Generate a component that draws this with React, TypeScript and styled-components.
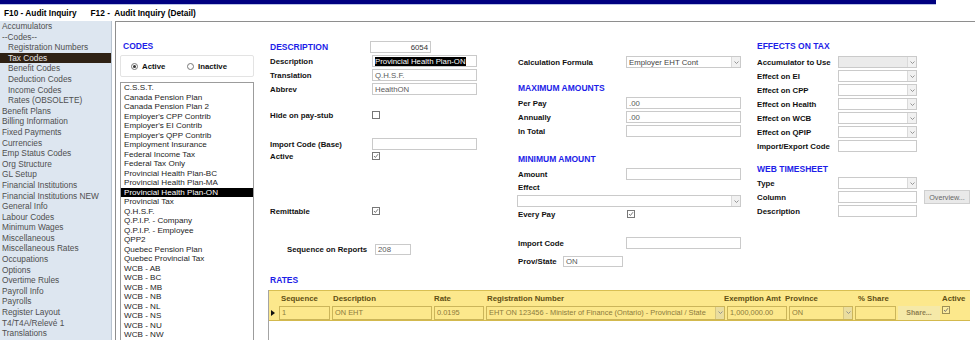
import React from 'react'
import styled, { createGlobalStyle } from 'styled-components'

const GlobalStyle = createGlobalStyle`
  html, body {
    margin: 0;
    padding: 0;
    background: #fff;
  }
  body {
    font-family: "Liberation Sans", Arial, sans-serif;
    overflow: hidden;
  }
`

const navItems: { label: string; indent?: boolean; active?: boolean }[] = [
  { label: 'Accumulators' },
  { label: '--Codes--' },
  { label: 'Registration Numbers', indent: true },
  { label: 'Tax Codes', indent: true, active: true },
  { label: 'Benefit Codes', indent: true },
  { label: 'Deduction Codes', indent: true },
  { label: 'Income Codes', indent: true },
  { label: 'Rates (OBSOLETE)', indent: true },
  { label: 'Benefit Plans' },
  { label: 'Billing Information' },
  { label: 'Fixed Payments' },
  { label: 'Currencies' },
  { label: 'Emp Status Codes' },
  { label: 'Org Structure' },
  { label: 'GL Setup' },
  { label: 'Financial Institutions' },
  { label: 'Financial Institutions NEW' },
  { label: 'General Info' },
  { label: 'Labour Codes' },
  { label: 'Minimum Wages' },
  { label: 'Miscellaneous' },
  { label: 'Miscellaneous Rates' },
  { label: 'Occupations' },
  { label: 'Options' },
  { label: 'Overtime Rules' },
  { label: 'Payroll Info' },
  { label: 'Payrolls' },
  { label: 'Register Layout' },
  { label: 'T4/T4A/Relevé 1' },
  { label: 'Translations' },
]

const codes = [
  'C.S.S.T.',
  'Canada Pension Plan',
  'Canada Pension Plan 2',
  "Employer's CPP Contrib",
  "Employer's EI Contrib",
  "Employer's QPP Contrib",
  'Employment Insurance',
  'Federal Income Tax',
  'Federal Tax Only',
  'Provincial Health Plan-BC',
  'Provincial Health Plan-MA',
  'Provincial Health Plan-ON',
  'Provincial Tax',
  'Q.H.S.F.',
  'Q.P.I.P. - Company',
  'Q.P.I.P. - Employee',
  'QPP2',
  'Quebec Pension Plan',
  'Quebec Provincial Tax',
  'WCB - AB',
  'WCB - BC',
  'WCB - MB',
  'WCB - NB',
  'WCB - NL',
  'WCB - NS',
  'WCB - NU',
  'WCB - NW',
]

const effects = ['Accumulator to Use', 'Effect on EI', 'Effect on CPP', 'Effect on Health', 'Effect on WCB', 'Effect on QPIP']

// ---------- small widgets ----------

const Chevron = () => (
  <svg width="5" height="3" viewBox="0 0 5 3">
    <path d="M0.5 0.5 L2.5 2.5 L4.5 0.5" fill="none" stroke="#8a8a8a" strokeWidth="0.9" />
  </svg>
)

const CheckMark = () => (
  <svg width="6" height="6" viewBox="0 0 6 6">
    <path d="M1 3 L2.4 4.5 L5 1.2" fill="none" stroke="#6a6a6a" strokeWidth="0.9" />
  </svg>
)

const Check = ({ checked, $tone }: { checked?: boolean; $tone?: 'yellow' }) => (
  <CheckBox $tone={$tone}>{checked && <CheckMark />}</CheckBox>
)

const Radio = ({ checked }: { checked?: boolean }) => (
  <RadioCircle>{checked && <RadioDot />}</RadioCircle>
)

const Select = ({ w, value, disabled }: { w: number; value?: string; disabled?: boolean }) => (
  <SelectBox $w={w} $disabled={disabled}>
    <SelectText>{value}</SelectText>
    <ArrowBox>
      <Chevron />
    </ArrowBox>
  </SelectBox>
)

const App: React.FC = () => {
  return (
    <Page>
      <GlobalStyle />
      <TopBar />
      <TitleBar>
        <span>F10 - Audit Inquiry</span>
        <span>F12 -&nbsp; Audit Inquiry (Detail)</span>
      </TitleBar>

      <Body>
        <Sidebar>
          {navItems.map((n) => (
            <NavItem key={n.label} $indent={n.indent} $active={n.active}>
              {n.label}
            </NavItem>
          ))}
        </Sidebar>

        <Panel>
          <CodesCol>
            <Row>
              <Heading $pl={3}>CODES</Heading>
            </Row>
            <RadioGroup>
              <RadioOption $w={56}>
                <Radio checked />
                <span>Active</span>
              </RadioOption>
              <RadioOption>
                <Radio />
                <span>Inactive</span>
              </RadioOption>
            </RadioGroup>
            <CodeList>
              {codes.map((c) => (
                <CodeItem key={c} $selected={c === 'Provincial Health Plan-ON'}>
                  {c}
                </CodeItem>
              ))}
            </CodeList>
          </CodesCol>

          <Main>
            <Columns>
              {/* description column */}
              <Column $w={250} $pl={2}>
                <Row $mt={1}>
                  <Heading as="span" $w={100}>DESCRIPTION</Heading>
                  <Field $w={61} $align="flex-end" $dark>6054</Field>
                </Row>
                <Row>
                  <Label $w={102}>Description</Label>
                  <Field $w={105}>
                    <Highlight>Provincial Health Plan-ON</Highlight>
                  </Field>
                </Row>
                <Row>
                  <Label $w={102}>Translation</Label>
                  <Field $w={105}>Q.H.S.F.</Field>
                </Row>
                <Row>
                  <Label $w={102}>Abbrev</Label>
                  <Field $w={105}>HealthON</Field>
                </Row>
                <Row $mt={12}>
                  <Label $w={102}>Hide on pay-stub</Label>
                  <Check />
                </Row>
                <Row $mt={15}>
                  <Label $w={102}>Import Code (Base)</Label>
                  <Field $w={105} />
                </Row>
                <Row $h={10}>
                  <Label $w={102}>Active</Label>
                  <Check checked />
                </Row>
                <Row $mt={43}>
                  <Label $w={102}>Remittable</Label>
                  <Check checked />
                </Row>
                <Row $mt={24} $pl={17}>
                  <Label $w={88}>Sequence on Reports</Label>
                  <Field $w={36} $h={11}>208</Field>
                </Row>
              </Column>

              {/* calculation column */}
              <Column $w={239}>
                <Row $mt={16}>
                  <Label $w={108}>Calculation Formula</Label>
                  <Select w={115} value="Employer EHT Cont" />
                </Row>
                <Row $mt={12}>
                  <Heading>MAXIMUM AMOUNTS</Heading>
                </Row>
                <Row $mt={1}>
                  <Label $w={108}>Per Pay</Label>
                  <Field $w={115}>.00</Field>
                </Row>
                <Row>
                  <Label $w={108}>Annually</Label>
                  <Field $w={115}>.00</Field>
                </Row>
                <Row>
                  <Label $w={108}>In Total</Label>
                  <Field $w={115} />
                </Row>
                <Row $mt={14}>
                  <Heading>MINIMUM AMOUNT</Heading>
                </Row>
                <Row $mt={1}>
                  <Label $w={108}>Amount</Label>
                  <Field $w={115} />
                </Row>
                <Row $h={12}>
                  <Label $w={108}>Effect</Label>
                </Row>
                <Row $mt={1} $pl={-1}>
                  <Select w={224} />
                </Row>
                <Row $h={12}>
                  <Label $w={109}>Every Pay</Label>
                  <Check checked />
                </Row>
                <Row $mt={16}>
                  <Label $w={108}>Import Code</Label>
                  <Field $w={115} />
                </Row>
                <Row $mt={4}>
                  <Label $w={45}>Prov/State</Label>
                  <Field $w={60} $h={11}>ON</Field>
                </Row>
              </Column>

              {/* effects column */}
              <Column>
                <Row>
                  <Heading>EFFECTS ON TAX</Heading>
                </Row>
                <Gap $h={2} />
                {effects.map((e, i) => (
                  <Row key={e}>
                    <Label $w={81}>{e}</Label>
                    <Select w={79} disabled={i === 0} />
                  </Row>
                ))}
                <Row>
                  <Label $w={81}>Import/Export Code</Label>
                  <Field $w={79} />
                </Row>
                <Row $mt={9}>
                  <Heading>WEB TIMESHEET</Heading>
                </Row>
                <Row>
                  <Label $w={81}>Type</Label>
                  <Select w={79} />
                </Row>
                <Row>
                  <Label $w={81}>Column</Label>
                  <Field $w={79} />
                  <Button>Overview...</Button>
                </Row>
                <Row>
                  <Label $w={81}>Description</Label>
                  <Field $w={79} />
                </Row>
              </Column>
            </Columns>

            <Row $pl={2}>
              <Heading>RATES</Heading>
            </Row>

            <RatesGrid>
              <RatesTable>
                <HeadRow>
                  <span />
                  <span>Sequence</span>
                  <span>Description</span>
                  <span>Rate</span>
                  <span>Registration Number</span>
                  <span>Exemption Amt</span>
                  <span>Province</span>
                  <span>% Share</span>
                  <span>Active</span>
                </HeadRow>
                <DataRow>
                  <Marker>
                    <svg width="4" height="6" viewBox="0 0 4 6">
                      <path d="M0 0 L4 3 L0 6 Z" fill="#111" />
                    </svg>
                  </Marker>
                  <Cell $w={51}>1</Cell>
                  <Cell $w={100}>ON EHT</Cell>
                  <Cell $w={50}>0.0195</Cell>
                  <Cell $w={239} $select>
                    <SelectText>EHT ON 123456 - Minister of Finance (Ontario) - Provincial / State</SelectText>
                    <CellArrow>
                      <Chevron />
                    </CellArrow>
                  </Cell>
                  <Cell $w={60}>1,000,000.00</Cell>
                  <Cell $w={64} $select>
                    <SelectText>ON</SelectText>
                    <CellArrow>
                      <Chevron />
                    </CellArrow>
                  </Cell>
                  <Cell $w={41} />
                  <ShareButton>Share...</ShareButton>
                  <ActiveCell>
                    <Check checked $tone="yellow" />
                  </ActiveCell>
                </DataRow>
              </RatesTable>
            </RatesGrid>
          </Main>
        </Panel>
      </Body>
    </Page>
  )
}

// ---------- layout ----------

const Page = styled.div`
  width: 975px;
  height: 340px;
  overflow: hidden;
`

const TopBar = styled.div`
  width: 936px;
  height: 4px;
  background: #000080;
  border-bottom: 1px solid #b9c3e6;
`

const TitleBar = styled.div`
  height: 16px;
  display: flex;
  align-items: center;
  gap: 14px;
  padding-left: 4px;
  font-size: 8.3px;
  font-weight: bold;
  color: #000;
  white-space: nowrap;
`

const Body = styled.div`
  display: flex;
  height: 319px;
  overflow: hidden;
`

const Sidebar = styled.nav`
  width: 111px;
  flex: none;
  background: #dde6f0;
  border-right: 1px solid #b9c4d0;
  font-size: 8.3px;
  line-height: 10.6px;
  color: #4f4f4f;
  overflow: hidden;
`

const NavItem = styled.div<{ $indent?: boolean; $active?: boolean }>`
  padding-left: ${(p) => (p.$indent ? 8 : 2)}px;
  white-space: nowrap;
  background: ${(p) => (p.$active ? '#2e2114' : 'transparent')};
  color: ${(p) => (p.$active ? '#e4e4e4' : 'inherit')};
`

const Panel = styled.main`
  flex: 1;
  display: flex;
  margin-left: 3px;
  padding-top: 17px;
  border-top: 1px solid #8e8e8e;
  border-left: 1px solid #8e8e8e;
  min-width: 0;
  overflow: hidden;
`

const CodesCol = styled.section`
  width: 134px;
  flex: none;
  margin-left: 4px;
  display: flex;
  flex-direction: column;
`

const Main = styled.div`
  flex: 1;
  margin-left: 14px;
  display: flex;
  flex-direction: column;
  min-width: 0;
`

const Columns = styled.div`
  display: flex;
  flex: none;
  height: 234px;
`

const Column = styled.div<{ $w?: number; $pl?: number }>`
  display: flex;
  flex-direction: column;
  width: ${(p) => (p.$w ? `${p.$w}px` : 'auto')};
  flex: ${(p) => (p.$w ? 'none' : '1')};
  padding-left: ${(p) => p.$pl ?? 0}px;
  box-sizing: border-box;
`

const Row = styled.div<{ $h?: number; $mt?: number; $pl?: number }>`
  display: flex;
  align-items: center;
  flex: none;
  height: ${(p) => p.$h ?? 14}px;
  margin-top: ${(p) => p.$mt ?? 0}px;
  margin-left: ${(p) => Math.min(p.$pl ?? 0, 0)}px;
  padding-left: ${(p) => Math.max(p.$pl ?? 0, 0)}px;
`

const Gap = styled.div<{ $h: number }>`
  height: ${(p) => p.$h}px;
  flex: none;
`

const Heading = styled.div<{ $w?: number; $pl?: number }>`
  font-size: 8.5px;
  font-weight: bold;
  color: #1d1de8;
  white-space: nowrap;
  padding-left: ${(p) => p.$pl ?? 0}px;
  width: ${(p) => (p.$w ? `${p.$w}px` : 'auto')};
  flex: none;
`

const Label = styled.span<{ $w: number }>`
  width: ${(p) => p.$w}px;
  flex: none;
  font-size: 7.8px;
  font-weight: bold;
  color: #111;
  white-space: nowrap;
`

const Field = styled.div<{ $w: number; $h?: number; $align?: string; $dark?: boolean }>`
  box-sizing: border-box;
  width: ${(p) => p.$w}px;
  height: ${(p) => p.$h ?? 12}px;
  flex: none;
  display: flex;
  align-items: center;
  justify-content: ${(p) => p.$align ?? 'flex-start'};
  padding: 0 2px;
  border: 1px solid #cacaca;
  background: #fff;
  font-size: 7.8px;
  color: ${(p) => (p.$dark ? '#333' : '#5a5a5a')};
  white-space: nowrap;
  overflow: hidden;
`

const Highlight = styled.span`
  background: #000;
  color: #fff;
  line-height: 9px;
`

const SelectBox = styled.div<{ $w: number; $disabled?: boolean }>`
  box-sizing: border-box;
  width: ${(p) => p.$w}px;
  height: 12px;
  flex: none;
  display: flex;
  align-items: stretch;
  border: 1px solid #cacaca;
  background: ${(p) => (p.$disabled ? '#ebebeb' : '#fff')};
  font-size: 7.8px;
  color: #444;
  overflow: hidden;
`

const SelectText = styled.span`
  flex: 1;
  min-width: 0;
  padding-left: 2px;
  display: flex;
  align-items: center;
  white-space: nowrap;
  overflow: hidden;
`

const ArrowBox = styled.span`
  width: 8px;
  flex: none;
  display: flex;
  align-items: center;
  justify-content: center;
  background: #f1f1f1;
  border-left: 1px solid #dadada;
`

const CheckBox = styled.span<{ $tone?: 'yellow' }>`
  box-sizing: border-box;
  width: 8px;
  height: 8px;
  flex: none;
  display: inline-flex;
  align-items: center;
  justify-content: center;
  border: 1px solid ${(p) => (p.$tone ? '#9d8f55' : '#777')};
  background: ${(p) => (p.$tone ? '#fcec9e' : '#fff')};
`

const Button = styled.div`
  box-sizing: border-box;
  margin-left: 7px;
  width: 46px;
  height: 14px;
  flex: none;
  display: flex;
  align-items: center;
  justify-content: center;
  background: #e9e9e9;
  border: 1px solid #cfcfcf;
  font-size: 7.2px;
  color: #666;
`

// ---------- codes ----------

const RadioGroup = styled.div`
  box-sizing: border-box;
  flex: none;
  margin-top: 2px;
  height: 22px;
  display: flex;
  align-items: center;
  padding-left: 10px;
  border: 1px solid #e3e3e3;
  border-radius: 2px;
`

const RadioOption = styled.label<{ $w?: number }>`
  display: flex;
  align-items: center;
  gap: 4px;
  width: ${(p) => (p.$w ? `${p.$w}px` : 'auto')};
  font-size: 7.8px;
  font-weight: bold;
  color: #111;
`

const RadioCircle = styled.span`
  box-sizing: border-box;
  width: 7px;
  height: 7px;
  border-radius: 50%;
  border: 1px solid #777;
  background: #fff;
  display: inline-flex;
  align-items: center;
  justify-content: center;
`

const RadioDot = styled.span`
  width: 3px;
  height: 3px;
  border-radius: 50%;
  background: #333;
`

const CodeList = styled.div`
  box-sizing: border-box;
  margin-top: 5px;
  height: 300px;
  flex: none;
  padding-left: 3px;
  border: 1px solid #9c9c9c;
  font-size: 8.1px;
  line-height: 9.5px;
  color: #1c1c1c;
  overflow: hidden;
`

const CodeItem = styled.div<{ $selected?: boolean }>`
  white-space: nowrap;
  margin-left: ${(p) => (p.$selected ? '-3px' : '0')};
  padding-left: ${(p) => (p.$selected ? '3px' : '0')};
  background: ${(p) => (p.$selected ? '#000' : 'transparent')};
  color: ${(p) => (p.$selected ? '#fff' : 'inherit')};
`

// ---------- rates ----------

const RatesGrid = styled.div`
  flex: none;
  margin-top: 3px;
  height: 60px;
  border-left: 1px solid #a4a4a4;
`

const RatesTable = styled.div`
  width: 701px;
  background: #fce88c;
  border-top: 1px solid #d8bf52;
  border-bottom: 1px solid #d3b94d;
`

const HeadRow = styled.div`
  display: grid;
  grid-template-columns: 12px 52px 101px 53px 237px 61px 73px 84px 1fr;
  align-items: center;
  height: 14px;
  font-size: 7.8px;
  font-weight: bold;
  color: #5f4f14;
  white-space: nowrap;
`

const DataRow = styled.div`
  display: flex;
  align-items: center;
  gap: 2px;
  height: 15px;
`

const Marker = styled.span`
  width: 8px;
  height: 15px;
  flex: none;
  display: flex;
  align-items: center;
  justify-content: center;
`

const Cell = styled.div<{ $w: number; $select?: boolean }>`
  box-sizing: border-box;
  width: ${(p) => p.$w}px;
  height: 14px;
  flex: none;
  display: flex;
  align-items: ${(p) => (p.$select ? 'stretch' : 'center')};
  padding: ${(p) => (p.$select ? '0' : '0 2px')};
  border: 1px solid #cbb55a;
  background: #fce88c;
  font-size: 7.4px;
  color: #8c7b3c;
  white-space: nowrap;
  overflow: hidden;
`

const CellArrow = styled.span`
  width: 8px;
  flex: none;
  display: flex;
  align-items: center;
  justify-content: center;
  background: #eadd9e;
  border-left: 1px solid #d6c680;
`

const ShareButton = styled.div`
  box-sizing: border-box;
  width: 42px;
  height: 14px;
  flex: none;
  display: flex;
  align-items: center;
  justify-content: center;
  background: #f5e9a8;
  font-size: 7px;
  font-weight: bold;
  color: #8f8152;
`

const ActiveCell = styled.span`
  display: flex;
  align-items: flex-start;
  height: 14px;
`

export default App
